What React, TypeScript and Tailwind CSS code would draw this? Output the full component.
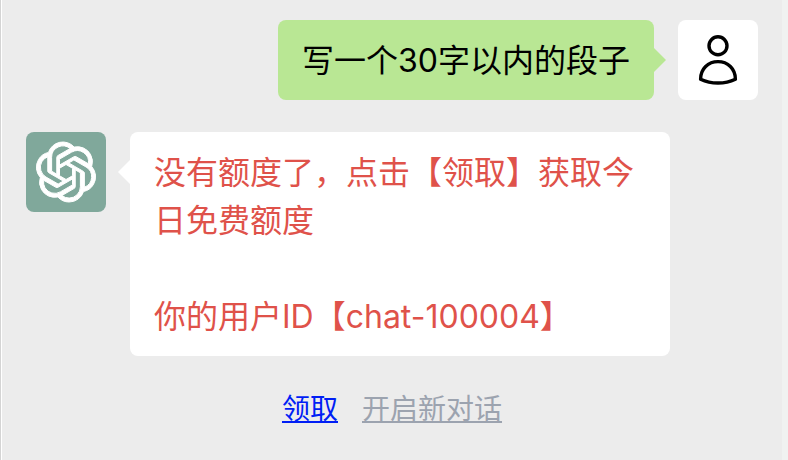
import type { ReactNode } from "react";
import { SiOpenai } from "react-icons/si";

function Avatar({ className, children }: { className: string; children: ReactNode }) {
  return (
    <div className={`flex size-20 shrink-0 items-center justify-center rounded-lg ${className}`}>
      {children}
    </div>
  );
}

function UserIcon() {
  return (
    <svg
      width="40"
      height="52"
      viewBox="0 0 40 52"
      fill="none"
      stroke="#000"
      strokeWidth="3.4"
      strokeLinejoin="round"
      role="img"
      aria-label="用户"
    >
      <circle cx="20" cy="11.8" r="9" />
      <path d="M2.6 45.2C2.6 35 10.2 27.6 20 27.6S37.4 35 37.4 45.2C32 47.8 26 49 20 49S8 47.8 2.6 45.2Z" />
    </svg>
  );
}

function UserMessage({ children }: { children: ReactNode }) {
  return (
    <div className="flex items-start justify-end gap-6 pl-[88px]">
      <div className="relative min-w-0 rounded-lg bg-[#b9e794] px-6 pt-[17px] pb-[15px] text-black">
        <span className="absolute top-7 left-full border-y-12 border-l-12 border-y-transparent border-l-[#b9e794]" />
        <p>{children}</p>
      </div>
      <Avatar className="bg-white">
        <UserIcon />
      </Avatar>
    </div>
  );
}

function BotMessage({ children }: { children: ReactNode }) {
  return (
    <div className="flex items-start gap-6 pr-[88px]">
      <Avatar className="bg-[#80a89b]">
        <SiOpenai size={60} color="#fff" stroke="#fff" strokeWidth={0.4} className="overflow-visible" title="ChatGPT" />
      </Avatar>
      <div className="relative min-w-0 rounded-lg bg-white px-6 pt-[17px] pb-[15px] text-[#df524a]">
        <span className="absolute top-7 right-full border-y-12 border-r-12 border-y-transparent border-r-white" />
        {children}
      </div>
    </div>
  );
}

export default function App() {
  return (
    <div className="flex min-h-screen border-l border-[#d4d4d4] bg-[#f0f2f1] font-['Inter','Noto_Sans_CJK_SC',sans-serif] text-[32px] leading-[48px]">
      <main className="mr-1.5 flex min-w-0 flex-1 flex-col gap-8 border-l border-white bg-[#ececec] px-6 pt-5 pb-7">
        <UserMessage>写一个30字以内的段子</UserMessage>
        <BotMessage>
          <p>没有额度了，点击【领取】获取今日免费额度</p>
          <p className="mt-12">你的用户ID【chat-100004】</p>
        </BotMessage>
        <nav className="flex justify-center gap-6 text-[28px] leading-[42px]">
          <a href="#claim" className="text-[#001ef5] underline decoration-2 underline-offset-2 [text-decoration-skip-ink:none]">
            领取
          </a>
          <a href="#new" className="text-[#9ca3af] underline decoration-2 underline-offset-2 [text-decoration-skip-ink:none]">
            开启新对话
          </a>
        </nav>
      </main>
    </div>
  );
}
